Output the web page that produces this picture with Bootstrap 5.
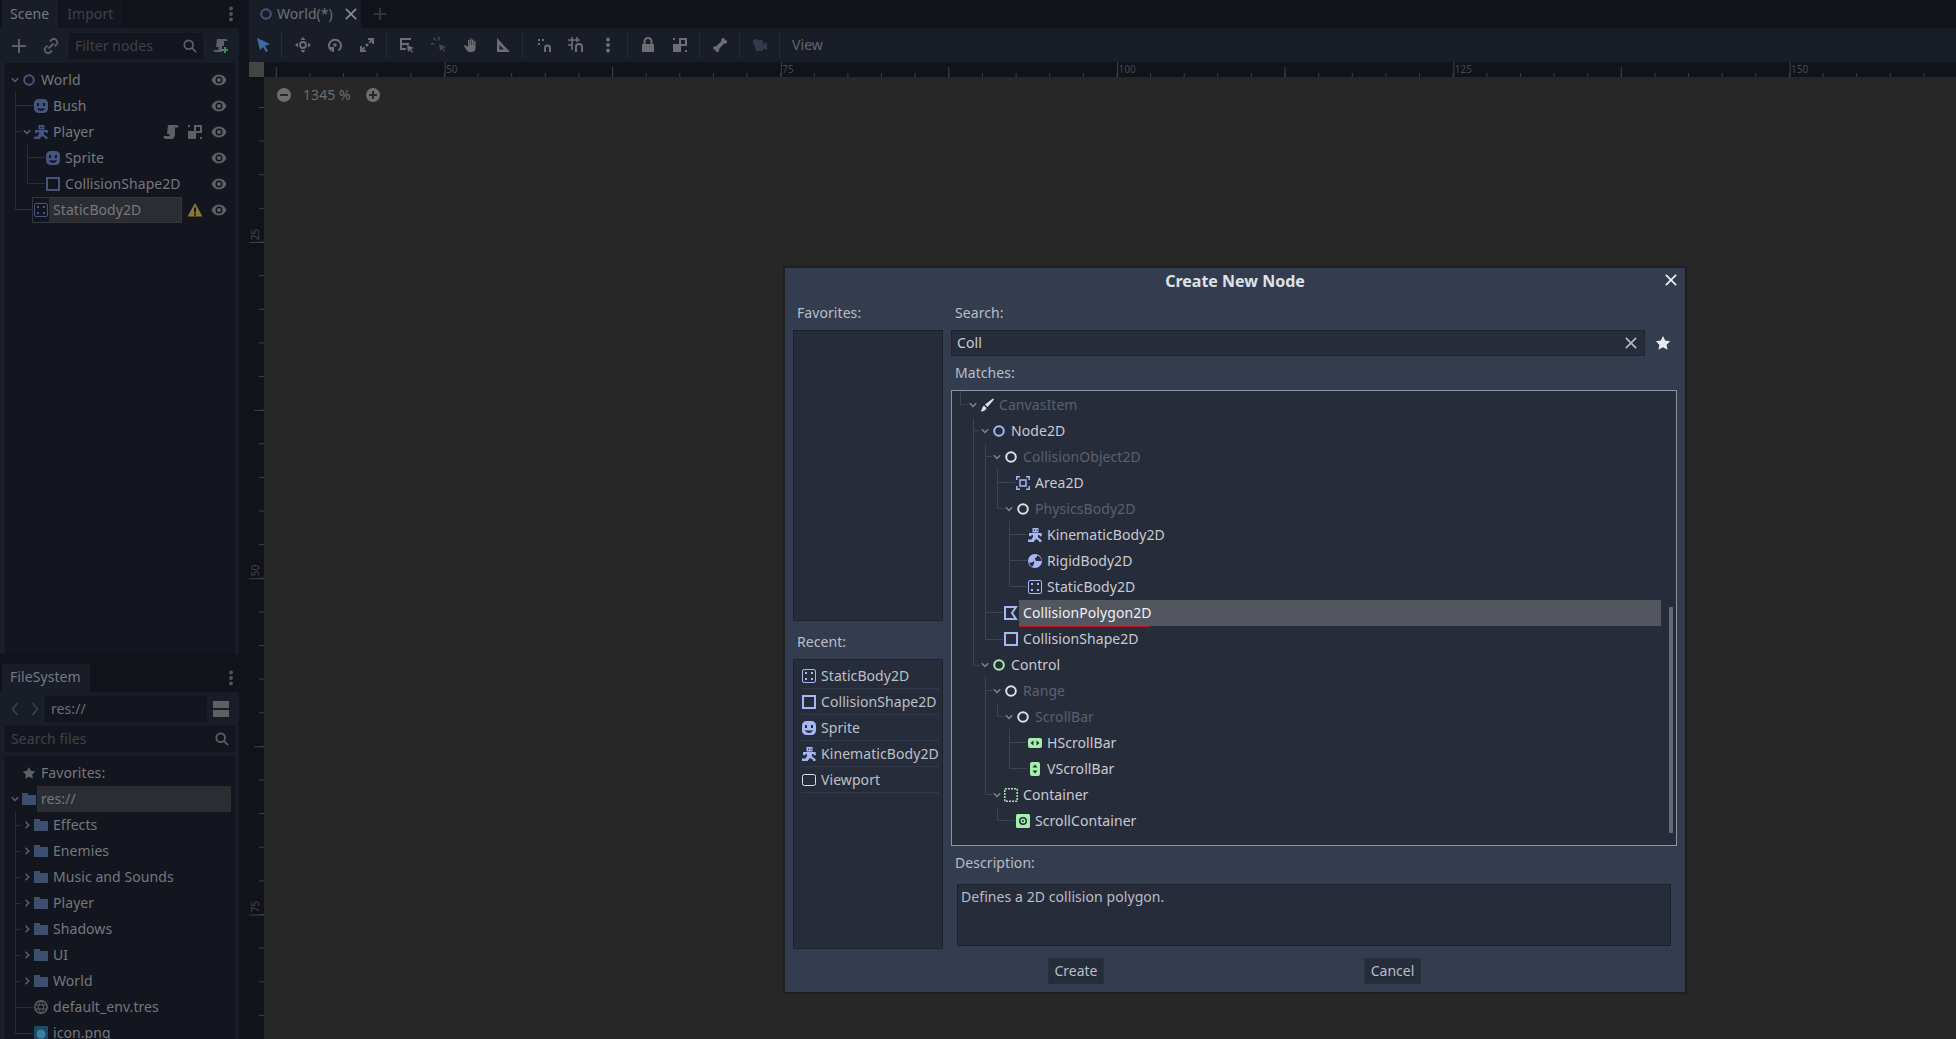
<!DOCTYPE html>
<html lang="en"><head><meta charset="utf-8"><title>Godot</title>
<link href="https://cdn.jsdelivr.net/npm/bootstrap@5.3.0/dist/css/bootstrap.min.css" rel="stylesheet">
<style>
html,body{height:1039px;overflow:hidden}
body{background:#10131a;font-family:"Noto Sans","Open Sans",sans-serif;font-size:14px;letter-spacing:.07px;line-height:26px;color:#76787d;position:relative}
svg{display:block;flex:none}
.ico{width:14px;height:14px}
.dock{width:239px;flex:none;height:1039px}
.tabstrip{height:28px}
.dtab{height:28px;padding:0 9px 0 8px;margin-left:2px;background:#191d28;line-height:28px}
.dtab-off{background:#13161e;color:#3f4249;margin-left:1px}
.dots{color:#505257;width:16px;height:16px;margin-top:6px}
.dpanel{background:#191d28}
.scene-panel{height:626px;padding:3px 4px 0 5px}
.tools{height:30px}
.t-plus{margin-left:6px}
.t-link{margin-left:16px}
.t-field{margin-left:10px;width:134px;padding-right:8px}
.t-add{margin-left:10px}
.field{background:#13161e;border:1px solid #10131a;height:26px;line-height:24px;padding-left:5px;padding-right:5px;color:#3f4249}
.gtree{background:#13161e;border:1px solid #10131a;position:relative;width:230px;overflow:hidden}
.scene-tree{height:591px;margin-top:2px;padding-top:3px}
.scene-guides{top:1px}
.fs-tab{margin-top:10px}
.fs-tab .dtab{line-height:25px}
.fs-panel{height:347px;padding:4px 4px 0 5px}
.fs-tree{height:300px;margin-top:4px;padding-top:3px}
.nav-row{height:26px}
.nav-l{margin-left:6px}
.nav-r{margin-left:12px;margin-right:6px}
.pathf{width:162px;color:#6c6e73}
.split-wrap{margin-left:6px;gap:2px}
.splitbar{width:16px;height:7px;background:#5f6063}
.fs-search{width:230px;margin-top:4px}
.trow{height:26px;display:flex;align-items:center;white-space:nowrap;padding-left:calc(var(--b,15px) + 12px*var(--l,0))}
.gtree .trow{--b:3px}
.l1{--l:1}.l2{--l:2}.l3{--l:3}.l4{--l:4}.l5{--l:5}.l6{--l:6}
.ar{width:13px;height:8px;flex:none;display:flex;justify-content:center;padding-right:1px}
.ar svg{width:8px;height:8px}
.ic2{margin-right:5px}
.cdim{color:#46557f}
.gdim{color:#5f6063}
.acts{margin-left:auto;display:flex;gap:8px;padding-right:7px}
.acts svg{width:16px;height:16px}
.selbox{display:flex;align-items:center;width:150px;height:26px;border:1px solid #33363e;margin-left:-2px;padding-left:1px}
.selfill{background:#2b2d33;flex:1;height:24px;line-height:24px;margin-left:1px;padding-left:4px}
.resrow{background:#2b2d33;flex:1;margin-right:3px;height:26px;padding-left:4px;margin-left:-4px}
.guides{position:absolute;left:0;top:0;pointer-events:none}
.main{flex:1;margin-left:10px;min-width:0}
.tabrow{height:28px}
.mtab{height:28px;width:112px;background:#191d28;padding-left:10px;line-height:28px;color:#6e7075}
.tabx{color:#8a8b8d;margin-left:12px}
.tabplus{color:#34373f;margin-left:12px}
.toolbar{height:34px;background:#191d28}
.tb{width:32px;height:34px;display:flex;align-items:center;justify-content:center;color:#6d6e71;flex:none}
.tb svg{width:16px;height:16px}
.tb1{width:28px;margin-right:1px;color:#3f6aa5}
.tb-m{margin-left:1px}
.tb-cam{color:#343a4a}
.tb-view{margin-left:8px;color:#64666b}
.sp{width:8px;height:26px;flex:none;position:relative}
.sp::after{content:"";position:absolute;left:3px;top:0;width:1px;height:26px;background:#252a37}
.rulerrow{height:15px;background:#10131a}
.corner{width:15px;flex:none;background:#444}
.hruler{flex:1;min-width:0;overflow:hidden;display:flex;padding-left:182px;font-size:10px;line-height:15px;color:#45484e;background:
 linear-gradient(90deg,#3d3f46 1px,transparent 1px) 180.6px 0/336.25px 15px repeat-x,
 linear-gradient(90deg,#3d3f46 1px,transparent 1px) 11.8px 5px/336.25px 10px repeat-x,
 linear-gradient(90deg,#3d3f46 1px,transparent 1px) 11.8px 10.5px/33.625px 5px repeat-x,#10131a}
.hruler span{width:336.25px;flex:none}
.hruler span:last-child{width:auto}
.canvasrow{height:962px}
.vruler{width:15px;flex:none;overflow:hidden;display:flex;flex-direction:column;font-size:10px;line-height:13px;color:#45484e;background:
 linear-gradient(#3d3f46 1px,transparent 1px) 0 165px/15px 336.25px repeat-y,
 linear-gradient(#3d3f46 1px,transparent 1px) 5px 333px/10px 336.25px repeat-y,
 linear-gradient(#3d3f46 1px,transparent 1px) 10px 30px/5px 33.625px repeat-y,#10131a}
.vruler span{height:336.25px;flex:none;writing-mode:vertical-rl;transform:rotate(180deg);padding-top:2px;text-align:left}
.vruler span:first-child{margin-top:-171.25px}
.canvasbg{flex:1;background:#272727}
.zoomctl{padding-left:13px;height:36px;color:#6c6d6e}
.zoomctl svg{width:14px;height:14px}
.zoomtxt{margin:0 14px 0 12px;width:49px}
.dlg{position:absolute;left:785px;top:268px;width:900px;height:724px;background:#343d50;box-shadow:0 0 0 2px #1f1f1f;color:#b9bdc5}
.dlg-title{height:26px;font-weight:700;color:#dfe1e5;text-align:center;position:relative;font-size:16px;letter-spacing:0}
.dlg-x{position:absolute;right:8px;top:6px;width:12px;height:12px;color:#eceef1}
.dlg-body{padding:6px 8px 0;gap:8px;height:655px}
.lcol{width:150px;flex:none}
.rcol{width:726px;flex:none}
.lbl{height:26px;padding-left:4px}
.lbl-gap{margin-top:4px}
.lbl-rec{margin-top:8px}
.inbox{background:#272c3b;border:1px solid #1c212c}
.fav{height:291px}
.rec{height:290px;margin-top:4px;padding:3px 3px 0 7px}
.recrow{height:26px;display:flex;align-items:center;border-bottom:1px solid #30384a;padding-left:1px;white-space:nowrap;color:#bcc0c7}
.recrow svg{margin-right:5px}
.srch{height:26px;margin-top:4px}
.srch-in{width:694px;height:26px;line-height:24px;background:#272c3b;border:1px solid #1f2430;padding:0 5px;color:#c9ccd2;position:relative}
.srch-x{position:absolute;right:7px;top:6px;width:12px;height:12px;color:#b4b7bd}
.star{width:16px;height:16px;margin-left:10px;color:#e8e9eb}
.mtree{position:relative;height:456px;margin-top:4px;background:#272c3b;border:1px solid #8f95a2;overflow:hidden;padding-top:1px;color:#c7cad0}
.mtree .ar{color:#7d8391}
.off{color:#5b606e}
.cw{color:#e0e0e0}
.cb{color:#a5b7f3}
.cg{color:#a5efac}
.sel{position:relative;flex:1;margin-left:-4px;margin-right:15px;padding-left:4px;height:26px;background:#53565f;color:#eef0f3}
.sel::after{content:"";position:absolute;left:0;top:26px;width:131px;height:1px;background:#c6141c}
.sbar{position:absolute;left:717px;top:216px;width:4px;height:226px;background:#666a75;border-radius:1px}
.dscl{margin-top:4px;height:26px}
.dsc{margin:8px 0 0 6px;width:714px;height:62px;line-height:24px;padding:0 3px;background:#272c3b;border:1px solid #1c212c}
.foot{padding-left:263px;height:26px;margin-top:9px}
.gbtn{height:26px;line-height:24px;font-size:14px;background:#272c3b;border:1px solid #2b3040;color:#b9bdc5;text-align:center;padding:0;border-radius:0}
.gc{width:56px}.gx{width:57px;margin-left:260px}
</style></head>
<body>
<svg width="0" height="0" class="position-absolute">
<defs>
<symbol id="node" viewBox="0 0 14 14"><circle cx="7" cy="7" r="4.800" fill="none" stroke="currentColor" stroke-width="2"/></symbol>
<symbol id="sprite" viewBox="0 0 14 14"><path fill="currentColor" fill-rule="evenodd" d="M4.500 0h5A4.500 4.500 0 0 1 14 4.500v5A4.500 4.500 0 0 1 9.500 14h-5A4.500 4.500 0 0 1 0 9.500v-5A4.500 4.500 0 0 1 4.500 0zM3 4v3h2V4zM9 4v3h2V4zM3 9c.7 2 2.300 3 4 3s3.300-1 4-3c-2.600 .8-5.400 .8-8 0z"/></symbol>
<symbol id="shape" viewBox="0 0 14 14"><rect x="1" y="1" width="12" height="12" fill="none" stroke="currentColor" stroke-width="2"/></symbol>
<symbol id="static" viewBox="0 0 14 14"><rect x=".5" y=".5" width="13" height="13" rx="1.500" fill="none" stroke="currentColor"/><path fill="currentColor" d="M3 3h2v2H3zM9 3h2v2H9zM3 9h2v2H3zM9 9h2v2H9z"/></symbol>
<symbol id="kin" viewBox="0 0 14 14"><path fill="currentColor" fill-rule="evenodd" d="M4.500 0h6v4.500h-6zM6 1.500V3h1V1.500zM8.500 1.500V3h1V1.500zM1 5h12.500l.5 3-2 .5-.5-1.500H10v2.500l3.500 2.500V14H11v-1.200L8 11l-2.500 3H0v-2.500h3.500L5 9V7H3.500L3 8.500 1 8z"/></symbol>
<symbol id="area" viewBox="0 0 14 14"><path fill="none" stroke="currentColor" stroke-width="1.500" d="M.8 4V.8H4M10 .8h3.200V4M13.200 10v3.200H10M4 13.200H.8V10"/><rect x="4" y="4" width="6" height="6" fill="none" stroke="currentColor" stroke-width="1.500"/></symbol>
<symbol id="rigid" viewBox="0 0 14 14"><path fill="currentColor" fill-rule="evenodd" d="M7 0a7 7 0 1 1 0 14A7 7 0 0 1 7 0zM9 3a2 2 0 0 0 0 4h4.500A6 6 0 0 0 9 1.500zM1 8.500c1.500 .5 3.500 0 5-1.500 .5 2-.5 4.500-2 5.800A6.500 6.500 0 0 1 1 8.500z"/></symbol>
<symbol id="poly" viewBox="0 0 14 14"><path fill="none" stroke="currentColor" stroke-width="2" d="M1 1h11L8 7l4 6H1z"/></symbol>
<symbol id="hs" viewBox="0 0 14 14"><path fill="currentColor" fill-rule="evenodd" d="M2 2h10a2 2 0 0 1 2 2v6a2 2 0 0 1-2 2H2a2 2 0 0 1-2-2V4a2 2 0 0 1 2-2zM5.500 4.500L2.500 7l3 2.500zM8.500 4.500v5l3-2.500z"/></symbol>
<symbol id="vs" viewBox="0 0 14 14"><path fill="currentColor" fill-rule="evenodd" d="M4 0h6a2 2 0 0 1 2 2v10a2 2 0 0 1-2 2H4a2 2 0 0 1-2-2V2a2 2 0 0 1 2-2zM4.500 5.500h5L7 2.500zM4.500 8.500L7 11.500l2.500-3z"/></symbol>
<symbol id="cont" viewBox="0 0 14 14"><rect x=".8" y=".8" width="12.400" height="12.400" fill="none" stroke="currentColor" stroke-width="1.500" stroke-dasharray="2 1.100"/></symbol>
<symbol id="scr" viewBox="0 0 14 14"><path fill="currentColor" fill-rule="evenodd" d="M1.500 0h11A1.500 1.500 0 0 1 14 1.500v11a1.500 1.500 0 0 1-1.500 1.500h-11A1.500 1.500 0 0 1 0 12.500v-11A1.500 1.500 0 0 1 1.500 0zM7 3a4 4 0 1 0 0 8 4 4 0 0 0 0-8zm0 1.500a2.500 2.500 0 1 1 0 5 2.500 2.500 0 0 1 0-5zM7 6a1 1 0 1 0 0 2 1 1 0 0 0 0-2z"/></symbol>
<symbol id="view" viewBox="0 0 14 14"><rect x=".5" y="1.500" width="13" height="11" rx="2" fill="none" stroke="currentColor"/></symbol>
<symbol id="brush" viewBox="0 0 14 14"><path fill="currentColor" d="M13 .5l1 1-6.500 7.500-2.500-2.500zM4 7.500l2.500 2.500c-.5 2-2.500 3.500-6 3.500 1.500-1 1-4 3.500-6z"/></symbol>
<symbol id="down" viewBox="0 0 8 8"><path fill="none" stroke="currentColor" stroke-width="1.500" d="M.8 2.200L4 5.500l3.200-3.300"/></symbol>
<symbol id="right" viewBox="0 0 8 8"><path fill="none" stroke="currentColor" stroke-width="1.500" d="M2.500.8L5.800 4 2.500 7.200"/></symbol>
<symbol id="eye" viewBox="0 0 16 16"><path fill="currentColor" fill-rule="evenodd" d="M8 2.500c3.500 0 6.200 2.200 7.500 5.500-1.300 3.300-4 5.500-7.500 5.500S1.800 11.300 .5 8C1.800 4.700 4.500 2.500 8 2.500zM8 4.500a3.500 3.500 0 1 0 0 7 3.500 3.500 0 0 0 0-7zm0 1.500a2 2 0 1 1 0 4 2 2 0 0 1 0-4z"/></symbol>
<symbol id="script" viewBox="0 0 16 16"><path fill="currentColor" d="M5 1h9c1.200 0 1.500 1 1.500 2.500H12V10c0 2.500-1 4-2 5H2.500C1 15 .5 13.500 .5 12h6V10H4z"/></symbol>
<symbol id="grp" viewBox="0 0 16 16"><path fill="currentColor" fill-rule="evenodd" d="M1 7h6V1h8v8H9v6H1zM9 3v4h4V3zM1 1h2v2H1zM13 13h2v2h-2z"/></symbol>
<symbol id="warn" viewBox="0 0 16 16"><path fill="#8d7532" fill-rule="evenodd" d="M8 1l7.500 13.500H.5zM7 5.500v5h2v-5zM7 11.500v2h2v-2z"/></symbol>
<symbol id="plus" viewBox="0 0 16 16"><path fill="none" stroke="currentColor" stroke-width="2" d="M8 1v14M1 8h14"/></symbol>
<symbol id="link" viewBox="0 0 16 16"><path fill="none" stroke="currentColor" stroke-width="1.800" d="M7 3.500l2-2c1.500-1 3.500-.5 4.500 .8 1 1.200 1 3 0 4l-2 2M9 12.500l-2 2c-1.500 1-3.500 .5-4.500-.8-1-1.200-1-3 0-4l2-2M5.500 10.500l5-5"/></symbol>
<symbol id="search" viewBox="0 0 16 16"><path fill="none" stroke="currentColor" stroke-width="2" d="M6.500 1.500a5 5 0 1 1 0 10 5 5 0 0 1 0-10zM10 10l5 5"/></symbol>
<symbol id="sadd" viewBox="0 0 16 16"><path fill="#5f6063" d="M4 1h9c1 0 1.500 1 1.500 2H11v5H9v6H2C1 14 .5 13 .5 12h5V9H3z"/><path fill="#3d8b5c" d="M11 9h2v2h2v2h-2v2h-2v-2H9v-2h2z"/></symbol>
<symbol id="dots3" viewBox="0 0 16 16"><circle cx="8" cy="2.500" r="2" fill="currentColor"/><circle cx="8" cy="8" r="2" fill="currentColor"/><circle cx="8" cy="13.500" r="2" fill="currentColor"/></symbol>
<symbol id="folder" viewBox="0 0 14 14"><path fill="#3c4f6e" d="M0 1h6v2h8v10H0z"/></symbol>
<symbol id="star" viewBox="0 0 16 16"><path fill="currentColor" d="M8 1l2.200 4.500 5 .7-3.600 3.500.9 5L8 12.300 3.500 14.700l.9-5L.8 6.200l5-.7z"/></symbol>
<symbol id="globe" viewBox="0 0 14 14"><circle cx="7" cy="7" r="6.200" fill="none" stroke="#5f6063" stroke-width="1.400"/><path fill="none" stroke="#5f6063" d="M1 5h12M1 9h12M7 1c-3.500 4-3.500 8 0 12M7 1c3.500 4 3.500 8 0 12"/></symbol>
<symbol id="x" viewBox="0 0 14 14"><path fill="none" stroke="currentColor" stroke-width="2" d="M1 1l12 12M13 1L1 13"/></symbol>
<symbol id="minus" viewBox="0 0 14 14"><path fill="currentColor" fill-rule="evenodd" d="M7 0a7 7 0 1 1 0 14A7 7 0 0 1 7 0zM3 6v2h8V6z"/></symbol>
<symbol id="pluscirc" viewBox="0 0 14 14"><path fill="currentColor" fill-rule="evenodd" d="M7 0a7 7 0 1 1 0 14A7 7 0 0 1 7 0zM6 3v3H3v2h3v3h2V8h3V6H8V3z"/></symbol>
<symbol id="cursor" viewBox="0 0 16 16"><path fill="currentColor" d="M2 1l13 6-5 2 3 5-2 1-3-5-3 3z"/></symbol>
<symbol id="move" viewBox="0 0 16 16"><path fill="currentColor" d="M8 0l2.500 3h-5zM8 16l-2.500-3h5zM0 8l3-2.500v5zM16 8l-3 2.500v-5z"/><circle cx="8" cy="8" r="3" fill="none" stroke="currentColor" stroke-width="1.800"/></symbol>
<symbol id="rot" viewBox="0 0 16 16"><path fill="none" stroke="currentColor" stroke-width="2" d="M11.500 13.500a6 6 0 1 0-7 0"/><path fill="currentColor" d="M2 10h5v5H5v-3H2z"/><circle cx="8" cy="8" r="1.800" fill="currentColor"/></symbol>
<symbol id="scl" viewBox="0 0 16 16"><path fill="currentColor" d="M9 1h6v6h-2V4.500l-2 2-1.500-1.500 2-2H9zM1 9h2v2.500l2-2L6.500 11l-2 2H7v2H1z"/><circle cx="8" cy="8" r="1.500" fill="currentColor"/></symbol>
<symbol id="list" viewBox="0 0 16 16"><path fill="currentColor" d="M1 1h11v2H3v3h7v2H3v3h4v2H1z"/><path fill="currentColor" d="M8 8l7 3-3 1 2 3-1 1-2-3-2 2z"/></symbol>
<symbol id="pivot" viewBox="0 0 16 16"><path fill="currentColor" opacity=".55" d="M7 0h1.500v3.500H7zM0 6h3.500v1.500H0zM2 1.500l1-1 2.500 2.500-1 1zM8 7l7 3-3 1 2 3-1 1-2-3-2 2z"/></symbol>
<symbol id="pan" viewBox="0 0 16 16"><path fill="currentColor" d="M5 3h1.500v5H7V1.500h1.500V8H9V2.500h1.500V8h.5V4h1.500v7c0 2.500-1.500 4-4 4H7c-2 0-3-1-4-3L1 9l1-1 3 2z"/></symbol>
<symbol id="ruler" viewBox="0 0 16 16"><path fill="currentColor" fill-rule="evenodd" d="M2 1l13 14H2zM4.500 8v4.500H9z"/></symbol>
<symbol id="snap" viewBox="0 0 16 16"><path fill="none" stroke="currentColor" stroke-width="2" d="M9 15v-4a2.500 2.500 0 0 1 5 0v4"/><path fill="currentColor" d="M2 2h2v2H2zM6 2h2v2H6zM2 6h2v2H2z"/></symbol>
<symbol id="gsnap" viewBox="0 0 16 16"><path fill="none" stroke="currentColor" stroke-width="1.600" d="M4 0v13M0 3h12M9 0v5M0 8h4"/><path fill="none" stroke="currentColor" stroke-width="2" d="M8 15v-5a2.800 2.800 0 0 1 6 0v5"/></symbol>
<symbol id="lock" viewBox="0 0 16 16"><path fill="currentColor" fill-rule="evenodd" d="M8 0a4.500 4.500 0 0 1 4.500 4.500V7H14v8H2V7h1.500V4.500A4.500 4.500 0 0 1 8 0zm0 2a2.500 2.500 0 0 0-2.500 2.500V7h5V4.500A2.500 2.500 0 0 0 8 2z"/></symbol>
<symbol id="bone" viewBox="0 0 16 16"><path fill="currentColor" d="M11 1c1 0 2 .5 2 2 1.500 0 2.500 1 2 2.500-.5 1-2 1.500-3 1L7 12c.5 1 0 2.500-1 3-1.500 .5-2.500-.5-2.500-2C2 13 1 12 1.200 10.500 1.700 9.300 3 9 4 9.500L9.500 4C9 3 9.500 1 11 1z"/></symbol>
<symbol id="cam" viewBox="0 0 16 16"><path fill="currentColor" d="M4 2a2.500 2.500 0 0 1 2.500 1.500A2.500 2.500 0 0 1 11 5v2l4-1.500V13l-4-1.500V14H4l-1-4-1.500-3A3 3 0 0 1 4 2z"/></symbol>
</defs></svg>

<div class="d-flex">
  <div class="dock">
    <div class="tabstrip d-flex">
      <div class="dtab">Scene</div><div class="dtab dtab-off">Import</div>
      <svg class="dots ms-auto"><use href="#dots3"/></svg>
    </div>
    <div class="dpanel scene-panel">
      <div class="tools d-flex align-items-center">
        <svg width="16" height="16" class="gdim t-plus"><use href="#plus"/></svg>
        <svg width="16" height="16" class="gdim t-link"><use href="#link"/></svg>
        <div class="field t-field d-flex align-items-center justify-content-between"><span>Filter nodes</span><svg width="14" height="14" class="gdim"><use href="#search"/></svg></div>
        <svg width="16" height="16" class="t-add"><use href="#sadd"/></svg>
      </div>
      <div class="gtree scene-tree">
        <svg class="guides scene-guides" width="228" height="200" fill="none" stroke="#2a2e38"><path d="M9.500 28v117.500H27M9.500 41.500H27M9.500 67.500H15M21.500 80v39.500H39M21.500 93.500H39"/></svg>
        <div class="trow"><span class="ar gdim"><svg><use href="#down"/></svg></span><svg class="ico cdim ic2"><use href="#node"/></svg>World<span class="acts gdim"><svg><use href="#eye"/></svg></span></div>
        <div class="trow l1"><span class="ar"></span><svg class="ico cdim ic2"><use href="#sprite"/></svg>Bush<span class="acts gdim"><svg><use href="#eye"/></svg></span></div>
        <div class="trow l1"><span class="ar gdim"><svg><use href="#down"/></svg></span><svg class="ico cdim ic2"><use href="#kin"/></svg>Player<span class="acts gdim"><svg><use href="#script"/></svg><svg><use href="#grp"/></svg><svg><use href="#eye"/></svg></span></div>
        <div class="trow l2"><span class="ar"></span><svg class="ico cdim ic2"><use href="#sprite"/></svg>Sprite<span class="acts gdim"><svg><use href="#eye"/></svg></span></div>
        <div class="trow l2"><span class="ar"></span><svg class="ico cdim ic2"><use href="#shape"/></svg>CollisionShape2D<span class="acts gdim"><svg><use href="#eye"/></svg></span></div>
        <div class="trow l1"><span class="ar"></span><span class="selbox"><svg class="ico cdim"><use href="#static"/></svg><span class="selfill">StaticBody2D</span></span><span class="acts gdim"><svg><use href="#warn"/></svg><svg><use href="#eye"/></svg></span></div>
      </div>
    </div>
    <div class="tabstrip d-flex fs-tab">
      <div class="dtab">FileSystem</div>
      <svg class="dots ms-auto"><use href="#dots3"/></svg>
    </div>
    <div class="dpanel fs-panel">
      <div class="d-flex align-items-center nav-row">
        <svg width="8" height="14" viewBox="0 0 8 14" class="nav-l" fill="none" stroke="#3f424a" stroke-width="1.500"><path d="M6.500 1L1.500 7l5 6"/></svg>
        <svg width="8" height="14" viewBox="0 0 8 14" class="nav-r" fill="none" stroke="#3f424a" stroke-width="1.500"><path d="M1.500 1l5 6-5 6"/></svg>
        <div class="field pathf">res://</div>
        <div class="split-wrap d-flex flex-column"><div class="splitbar"></div><div class="splitbar"></div></div>
      </div>
      <div class="field fs-search d-flex align-items-center justify-content-between"><span>Search files</span><svg width="14" height="14" class="gdim"><use href="#search"/></svg></div>
      <div class="gtree fs-tree">
        <svg class="guides" width="228" height="300" fill="none" stroke="#2a2e38"><path d="M9.500 55v221.500H27M9.500 68.500H15M9.500 94.500H15M9.500 120.500H15M9.500 146.500H15M9.500 172.500H15M9.500 198.500H15M9.500 224.500H15M9.500 250.500H27"/></svg>
        <div class="trow"><span class="ar"></span><svg class="ico gdim ic2"><use href="#star"/></svg>Favorites:</div>
        <div class="trow"><span class="ar gdim"><svg><use href="#down"/></svg></span><svg class="ico ic2"><use href="#folder"/></svg><span class="resrow">res://</span></div>
        <div class="trow l1"><span class="ar gdim"><svg><use href="#right"/></svg></span><svg class="ico ic2"><use href="#folder"/></svg>Effects</div>
        <div class="trow l1"><span class="ar gdim"><svg><use href="#right"/></svg></span><svg class="ico ic2"><use href="#folder"/></svg>Enemies</div>
        <div class="trow l1"><span class="ar gdim"><svg><use href="#right"/></svg></span><svg class="ico ic2"><use href="#folder"/></svg>Music and Sounds</div>
        <div class="trow l1"><span class="ar gdim"><svg><use href="#right"/></svg></span><svg class="ico ic2"><use href="#folder"/></svg>Player</div>
        <div class="trow l1"><span class="ar gdim"><svg><use href="#right"/></svg></span><svg class="ico ic2"><use href="#folder"/></svg>Shadows</div>
        <div class="trow l1"><span class="ar gdim"><svg><use href="#right"/></svg></span><svg class="ico ic2"><use href="#folder"/></svg>UI</div>
        <div class="trow l1"><span class="ar gdim"><svg><use href="#right"/></svg></span><svg class="ico ic2"><use href="#folder"/></svg>World</div>
        <div class="trow l1"><span class="ar"></span><svg class="ico ic2"><use href="#globe"/></svg>default_env.tres</div>
        <div class="trow l1"><span class="ar"></span><svg class="ico ic2" viewBox="0 0 14 14"><rect width="14" height="14" fill="#1f4a66"/><circle cx="7" cy="8" r="4.500" fill="#3f7fa5"/></svg>icon.png</div>
      </div>
    </div>
  </div>

  <div class="main">
    <div class="d-flex tabrow">
      <div class="mtab d-flex align-items-center"><svg class="ico cdim me-1"><use href="#node"/></svg><span>World(*)</span><svg width="12" height="12" class="tabx"><use href="#x"/></svg></div>
      <svg width="14" height="14" class="align-self-center tabplus"><use href="#plus"/></svg>
    </div>
    <div class="toolbar d-flex align-items-center">
      <span class="tb tb1"><svg><use href="#cursor"/></svg></span><span class="sp"></span>
      <span class="tb tb-m"><svg><use href="#move"/></svg></span><span class="tb"><svg><use href="#rot"/></svg></span><span class="tb"><svg><use href="#scl"/></svg></span><span class="sp"></span>
      <span class="tb"><svg><use href="#list"/></svg></span><span class="tb"><svg><use href="#pivot"/></svg></span><span class="tb"><svg><use href="#pan"/></svg></span><span class="tb"><svg><use href="#ruler"/></svg></span><span class="sp"></span>
      <span class="tb tb-m"><svg><use href="#snap"/></svg></span><span class="tb"><svg><use href="#gsnap"/></svg></span><span class="tb"><svg><use href="#dots3"/></svg></span><span class="sp"></span>
      <span class="tb"><svg><use href="#lock"/></svg></span><span class="tb"><svg><use href="#grp"/></svg></span><span class="sp"></span>
      <span class="tb"><svg><use href="#bone"/></svg></span><span class="sp"></span>
      <span class="tb tb-cam"><svg><use href="#cam"/></svg></span><span class="sp"></span>
      <span class="tb-view">View</span>
    </div>
    <div class="d-flex rulerrow"><div class="corner"></div><div class="hruler"><span>50</span><span>75</span><span>100</span><span>125</span><span>150</span></div></div>
    <div class="d-flex canvasrow">
      <div class="vruler"><span>25</span><span>50</span><span>75</span><span></span></div>
      <div class="canvasbg">
        <div class="zoomctl d-flex align-items-center"><svg><use href="#minus"/></svg><span class="zoomtxt">1345 %</span><svg><use href="#pluscirc"/></svg></div>
      </div>
    </div>
  </div>
</div>

<div class="dlg">
  <div class="dlg-title">Create New Node<svg class="dlg-x"><use href="#x"/></svg></div>
  <div class="dlg-body d-flex">
    <div class="lcol">
      <div class="lbl">Favorites:</div>
      <div class="inbox fav lbl-gap"></div>
      <div class="lbl lbl-rec">Recent:</div>
      <div class="inbox rec">
        <div class="recrow"><svg class="ico cb"><use href="#static"/></svg>StaticBody2D</div>
        <div class="recrow"><svg class="ico cb"><use href="#shape"/></svg>CollisionShape2D</div>
        <div class="recrow"><svg class="ico cb"><use href="#sprite"/></svg>Sprite</div>
        <div class="recrow"><svg class="ico cb"><use href="#kin"/></svg>KinematicBody2D</div>
        <div class="recrow"><svg class="ico cw"><use href="#view"/></svg>Viewport</div>
      </div>
    </div>
    <div class="rcol">
      <div class="lbl">Search:</div>
      <div class="srch d-flex align-items-center">
        <div class="srch-in">Coll<svg class="srch-x"><use href="#x"/></svg></div>
        <svg class="star"><use href="#star"/></svg>
      </div>
      <div class="lbl lbl-gap">Matches:</div>
      <div class="mtree">
        <svg class="guides" width="724" height="454" fill="none" stroke="#3d4456"><path d="M8.500 0v13.500H16M21.500 27v247.500H27M21.500 39.500H27M33.500 53v195.500H51M33.500 65.500H40M45.500 78v39.500H51M45.500 91.500H63M45.500 117.500H52M57.500 130v65.500H75M57.500 143.500H75M57.500 169.500H75M33.500 221.500H51M33.500 286v117.500H40M33.500 299.500H40M45.500 312v13.500H52M57.500 338v39.500H75M57.500 351.500H75M45.500 416v13.500H63"/></svg>
        <div class="trow off"><span class="ar"><svg><use href="#down"/></svg></span><svg class="ico cw ic2"><use href="#brush"/></svg>CanvasItem</div>
        <div class="trow l1"><span class="ar"><svg><use href="#down"/></svg></span><svg class="ico cb ic2"><use href="#node"/></svg>Node2D</div>
        <div class="trow l2 off"><span class="ar"><svg><use href="#down"/></svg></span><svg class="ico cw ic2"><use href="#node"/></svg>CollisionObject2D</div>
        <div class="trow l3"><span class="ar"></span><svg class="ico cb ic2"><use href="#area"/></svg>Area2D</div>
        <div class="trow l3 off"><span class="ar"><svg><use href="#down"/></svg></span><svg class="ico cw ic2"><use href="#node"/></svg>PhysicsBody2D</div>
        <div class="trow l4"><span class="ar"></span><svg class="ico cb ic2"><use href="#kin"/></svg>KinematicBody2D</div>
        <div class="trow l4"><span class="ar"></span><svg class="ico cb ic2"><use href="#rigid"/></svg>RigidBody2D</div>
        <div class="trow l4"><span class="ar"></span><svg class="ico cb ic2"><use href="#static"/></svg>StaticBody2D</div>
        <div class="trow l2"><span class="ar"></span><svg class="ico cb ic2"><use href="#poly"/></svg><span class="sel">CollisionPolygon2D</span></div>
        <div class="trow l2"><span class="ar"></span><svg class="ico cb ic2"><use href="#shape"/></svg>CollisionShape2D</div>
        <div class="trow l1"><span class="ar"><svg><use href="#down"/></svg></span><svg class="ico cg ic2"><use href="#node"/></svg>Control</div>
        <div class="trow l2 off"><span class="ar"><svg><use href="#down"/></svg></span><svg class="ico cw ic2"><use href="#node"/></svg>Range</div>
        <div class="trow l3 off"><span class="ar"><svg><use href="#down"/></svg></span><svg class="ico cw ic2"><use href="#node"/></svg>ScrollBar</div>
        <div class="trow l4"><span class="ar"></span><svg class="ico cg ic2"><use href="#hs"/></svg>HScrollBar</div>
        <div class="trow l4"><span class="ar"></span><svg class="ico cg ic2"><use href="#vs"/></svg>VScrollBar</div>
        <div class="trow l2"><span class="ar"><svg><use href="#down"/></svg></span><svg class="ico cg ic2"><use href="#cont"/></svg>Container</div>
        <div class="trow l3"><span class="ar"></span><svg class="ico cg ic2"><use href="#scr"/></svg>ScrollContainer</div>
        <div class="sbar"></div>
      </div>
      <div class="lbl dscl">Description:</div>
      <div class="dsc">Defines a 2D collision polygon.</div>
    </div>
  </div>
  <div class="foot d-flex">
    <button class="btn gbtn gc" type="button">Create</button>
    <button class="btn gbtn gx" type="button">Cancel</button>
  </div>
</div>
</body></html>
